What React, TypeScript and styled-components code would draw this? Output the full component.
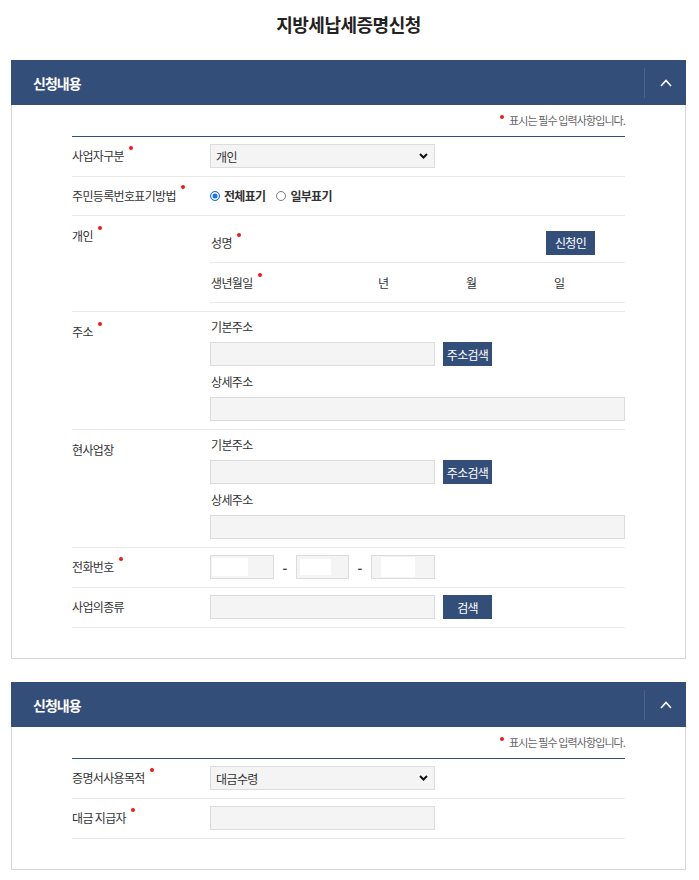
import React from 'react';
import styled, { createGlobalStyle } from 'styled-components';

const GlobalStyle = createGlobalStyle`
  * {
    box-sizing: border-box;
  }
  body {
    margin: 0;
    background: #ffffff;
    font-family: 'Noto Sans CJK KR', 'Noto Sans', sans-serif;
    color: #333333;
  }
`;

const NAVY = '#344e7a';

const Page = styled.div`
  width: 699px;
  padding: 0 13px 0 11px;
`;

const PageTitle = styled.h1`
  margin: 0;
  padding: 12px 0 24px;
  line-height: 24px;
  text-align: center;
  font-size: 18px;
  font-weight: 700;
  letter-spacing: -0.5px;
  color: #222222;
`;

const Panel = styled.section`
  margin-bottom: 23px;
`;

const PanelHeader = styled.div`
  height: 45px;
  background: ${NAVY};
  display: flex;
  align-items: center;
  justify-content: space-between;
  padding-left: 22px;

  h2 {
    margin: 0;
    font-size: 14px;
    font-weight: 700;
    letter-spacing: -1px;
    color: #ffffff;
  }
`;

const ToggleButton = styled.button`
  width: 42px;
  height: 30px;
  border: 0;
  border-left: 1px solid #4a6490;
  background: transparent;
  display: flex;
  align-items: center;
  justify-content: center;
  padding: 0;
  cursor: pointer;
`;

const PanelBody = styled.div`
  border: 1px solid #d6d6d6;
  border-top: 0;
  padding: 0 60px 30px;
`;

const Notice = styled.p`
  margin: 0;
  padding: 7px 0 8px;
  line-height: 16px;
  text-align: right;
  font-size: 11px;
  letter-spacing: -0.9px;
  color: #666666;
`;

const FormTable = styled.div`
  border-top: 1px solid ${NAVY};
`;

const Row = styled.div<{ $top?: boolean }>`
  display: grid;
  grid-template-columns: 138px 1fr;
  align-items: ${(p) => (p.$top ? 'start' : 'center')};
  padding: 7px 0 8px;
  border-bottom: 1px solid #e8e8e8;
`;

const Label = styled.div<{ $top?: boolean }>`
  font-size: 12px;
  line-height: 16px;
  letter-spacing: -0.65px;
  color: #333333;
  padding-top: ${(p) => (p.$top ? '5px' : '0')};
`;

const Req = styled.span`
  display: inline-block;
  width: 4px;
  height: 4px;
  margin-left: 5px;
  border-radius: 50%;
  background: #f01818;
  vertical-align: middle;
  position: relative;
  top: -10px;
`;

const NoticeDot = styled(Req)`
  margin: 0 5px 0 0;
  top: -5px;
`;

const Field = styled.div`
  display: flex;
  align-items: center;
  gap: 8px;
  min-height: 24px;
`;

const SelectBox = styled.div`
  width: 225px;
  height: 24px;
  background: #f4f4f4;
  border: 1px solid #dcdcdc;
  display: flex;
  align-items: center;
  justify-content: space-between;
  padding: 0 6px 0 5px;
  font-size: 12px;
  letter-spacing: -0.6px;
  color: #333333;
`;

const TextBox = styled.div<{ $w?: number; $full?: boolean; $inset?: number }>`
  width: ${(p) => (p.$full ? '100%' : `${p.$w ?? 225}px`)};
  height: 24px;
  background: #f4f4f4;
  border: 1px solid #dcdcdc;
  display: flex;
  align-items: center;
  padding-left: ${(p) => p.$inset ?? 1}px;
`;

const Masked = styled.span<{ $w: number; $h: number }>`
  display: block;
  width: ${(p) => p.$w}px;
  height: ${(p) => p.$h}px;
  background: #ffffff;
`;

const NavyButton = styled.button`
  width: 49px;
  height: 24px;
  padding: 0;
  border: 0;
  background: ${NAVY};
  color: #ffffff;
  font-family: inherit;
  font-size: 12px;
  letter-spacing: -0.7px;
  cursor: pointer;
`;

const RadioGroup = styled.div`
  display: flex;
  align-items: center;
  height: 23px;
  gap: 11px;
`;

const RadioItem = styled.label`
  display: flex;
  align-items: center;
  gap: 4px;
  font-size: 12px;
  font-weight: 700;
  letter-spacing: -0.7px;
  color: #333333;
`;

const RadioMark = styled.span<{ $on?: boolean }>`
  width: 10px;
  height: 10px;
  border-radius: 50%;
  border: 1px solid ${(p) => (p.$on ? '#1a73e8' : '#7a7a7a')};
  background: ${(p) => (p.$on ? '#1a73e8' : '#ffffff')};
  box-shadow: inset 0 0 0 1.5px #ffffff;
`;

const SubTable = styled.div``;

const SubRow = styled.div`
  height: 40px;
  border-bottom: 1px solid #e8e8e8;
  display: flex;
  align-items: center;
  justify-content: space-between;
  padding: 0 30px 0 1px;
  font-size: 12px;
  letter-spacing: -0.65px;
`;

const BirthRow = styled(SubRow)`
  display: grid;
  grid-template-columns: 167px 88px 88px auto;
  justify-content: start;
  padding-right: 0;
`;

const AddressBlock = styled.div`
  display: flex;
  flex-direction: column;

  & + & {
    margin-top: 8px;
  }
`;

const SubLabel = styled.div`
  font-size: 12px;
  line-height: 16px;
  letter-spacing: -0.65px;
  margin: 0 0 7px 1px;
`;

const PhoneGroup = styled.div`
  display: flex;
  align-items: center;
`;

const Dash = styled.span`
  width: 22px;
  text-align: center;
  font-size: 13px;
  font-weight: 700;
  color: #444444;
`;

const ChevronDown = () => (
  <svg width="9" height="6" viewBox="0 0 9 6">
    <polyline points="1,1 4.5,4.5 8,1" fill="none" stroke="#111" strokeWidth="2" />
  </svg>
);

const ChevronUp = () => (
  <svg width="12" height="8" viewBox="0 0 12 8">
    <polyline points="1,7 6,1.5 11,7" fill="none" stroke="#fff" strokeWidth="1.6" />
  </svg>
);

function PanelTop() {
  return (
    <PanelHeader>
      <h2>신청내용</h2>
      <ToggleButton aria-label="접기">
        <ChevronUp />
      </ToggleButton>
    </PanelHeader>
  );
}

function RequiredNotice() {
  return (
    <Notice>
      <NoticeDot />
      표시는 필수 입력사항입니다.
    </Notice>
  );
}

function Address({ required, title }: { required?: boolean; title: string }) {
  return (
    <Row $top>
      <Label $top>
        {title}
        {required && <Req />}
      </Label>
      <div>
        <AddressBlock>
          <SubLabel>기본주소</SubLabel>
          <Field>
            <TextBox />
            <NavyButton>주소검색</NavyButton>
          </Field>
        </AddressBlock>
        <AddressBlock>
          <SubLabel>상세주소</SubLabel>
          <TextBox $full />
        </AddressBlock>
      </div>
    </Row>
  );
}

export default function App() {
  return (
    <Page>
      <GlobalStyle />
      <PageTitle>지방세납세증명신청</PageTitle>

      <Panel>
        <PanelTop />
        <PanelBody>
          <RequiredNotice />
          <FormTable>
            <Row>
              <Label>
                사업자구분
                <Req />
              </Label>
              <SelectBox>
                개인
                <ChevronDown />
              </SelectBox>
            </Row>
            <Row>
              <Label>
                주민등록번호표기방법
                <Req />
              </Label>
              <RadioGroup>
                <RadioItem>
                  <RadioMark $on />
                  전체표기
                </RadioItem>
                <RadioItem>
                  <RadioMark />
                  일부표기
                </RadioItem>
              </RadioGroup>
            </Row>
            <Row $top>
              <Label $top>
                개인
                <Req />
              </Label>
              <SubTable>
                <SubRow>
                  <span>
                    성명
                    <Req />
                  </span>
                  <NavyButton>신청인</NavyButton>
                </SubRow>
                <BirthRow>
                  <span>
                    생년월일
                    <Req />
                  </span>
                  <span>년</span>
                  <span>월</span>
                  <span>일</span>
                </BirthRow>
              </SubTable>
            </Row>
            <Address required title="주소" />
            <Address title="현사업장" />
            <Row>
              <Label>
                전화번호
                <Req />
              </Label>
              <PhoneGroup>
                <TextBox $w={64}>
                  <Masked $w={36} $h={18} />
                </TextBox>
                <Dash>-</Dash>
                <TextBox $w={53} $inset={3}>
                  <Masked $w={31} $h={16} />
                </TextBox>
                <Dash>-</Dash>
                <TextBox $w={64} $inset={9}>
                  <Masked $w={34} $h={20} />
                </TextBox>
              </PhoneGroup>
            </Row>
            <Row>
              <Label>사업의종류</Label>
              <Field>
                <TextBox />
                <NavyButton>검색</NavyButton>
              </Field>
            </Row>
          </FormTable>
        </PanelBody>
      </Panel>

      <Panel>
        <PanelTop />
        <PanelBody>
          <RequiredNotice />
          <FormTable>
            <Row>
              <Label>
                증명서사용목적
                <Req />
              </Label>
              <SelectBox>
                대금수령
                <ChevronDown />
              </SelectBox>
            </Row>
            <Row>
              <Label>
                대금 지급자
                <Req />
              </Label>
              <TextBox />
            </Row>
          </FormTable>
        </PanelBody>
      </Panel>
    </Page>
  );
}
